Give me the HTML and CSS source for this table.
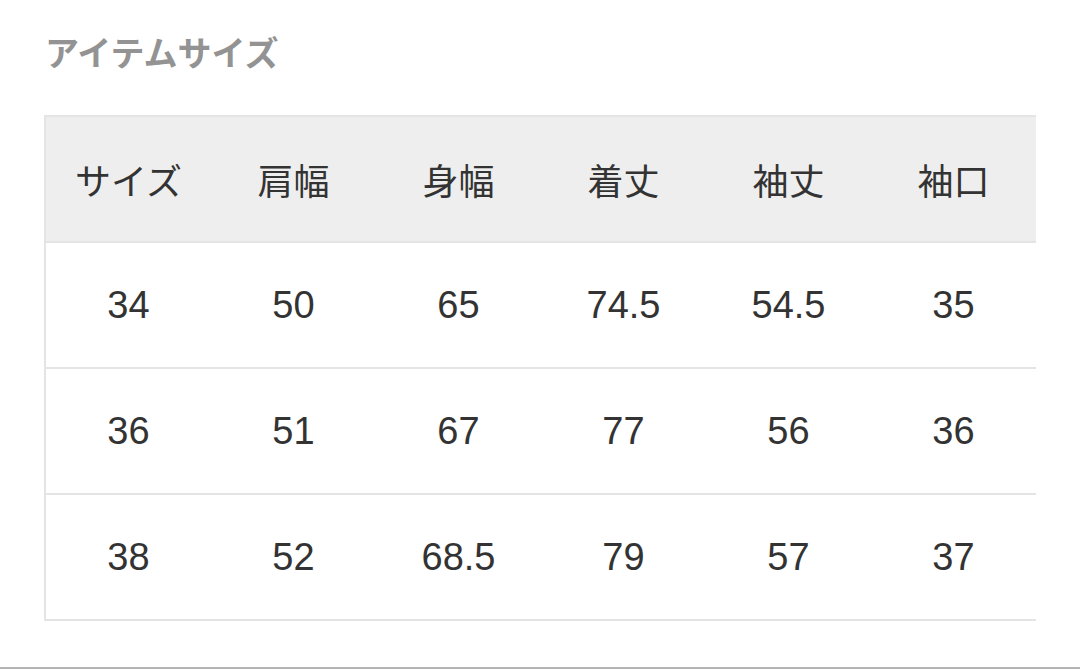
FILE: index.html
```html
<!DOCTYPE html>
<html lang="ja">
<head>
<meta charset="utf-8">
<link rel="stylesheet" href="styles.css">
</head>
<body>
<div class="page">
  <h2 class="title">アイテムサイズ</h2>
  <div class="size-table">
    <div class="row head">
      <div class="cell">サイズ</div>
      <div class="cell">肩幅</div>
      <div class="cell">身幅</div>
      <div class="cell">着丈</div>
      <div class="cell">袖丈</div>
      <div class="cell">袖口</div>
    </div>
    <div class="row">
      <div class="cell">34</div>
      <div class="cell">50</div>
      <div class="cell">65</div>
      <div class="cell">74.5</div>
      <div class="cell">54.5</div>
      <div class="cell">35</div>
    </div>
    <div class="row">
      <div class="cell">36</div>
      <div class="cell">51</div>
      <div class="cell">67</div>
      <div class="cell">77</div>
      <div class="cell">56</div>
      <div class="cell">36</div>
    </div>
    <div class="row">
      <div class="cell">38</div>
      <div class="cell">52</div>
      <div class="cell">68.5</div>
      <div class="cell">79</div>
      <div class="cell">57</div>
      <div class="cell">37</div>
    </div>
  </div>
  <div class="bottom-line"></div>
</div>
</body>
</html>
```

FILE: styles.css
```css
html, body {
  margin: 0;
  padding: 0;
  background: #ffffff;
}

.page {
  padding-top: 30px;
  font-family: "Liberation Sans", "Noto Sans CJK JP", sans-serif;
  color: #333333;
}

.title {
  margin: 0 0 41px 45px;
  font-family: "Noto Sans CJK JP", sans-serif;
  font-size: 34px;
  line-height: 44px;
  font-weight: 700;
  color: #939393;
}

.size-table {
  margin-left: 44px;
  width: 990px;
  border-left: 2px solid #e4e4e4;
  border-top: 2px solid #e4e4e4;
}

.row {
  display: grid;
  grid-template-columns: repeat(6, 165px);
  height: 124px;
  border-bottom: 2px solid #e4e4e4;
  background: #ffffff;
}

.row.head {
  background: #eeeeee;
}

.cell {
  display: flex;
  align-items: center;
  justify-content: center;
  font-size: 38px;
  font-family: "Liberation Sans", "Noto Sans CJK JP", sans-serif;
}

.row.head .cell {
  font-family: "Noto Sans CJK JP", sans-serif;
  font-size: 36px;
  color: #333333;
}

.bottom-line {
  margin-top: 46px;
  height: 2px;
  background: #b4b4b4;
}
```
